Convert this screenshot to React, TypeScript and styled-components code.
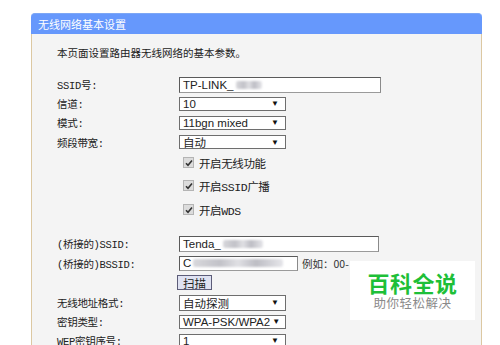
import React from 'react';
import styled, {createGlobalStyle} from 'styled-components';

const GlobalStyle = createGlobalStyle`
  html, body {
    margin: 0;
    padding: 0;
    background: #ffffff;
  }
  body {
    width: 500px;
    height: 345px;
    overflow: hidden;
    font-family: "Noto Sans CJK SC", sans-serif;
  }
`;

const Page = styled.div`
  position: relative;
  padding: 13px 0 0 31px;
  height: 332px;
  overflow: hidden;
`;

const Panel = styled.div`
  width: 451px;
  height: 340px;
  display: flex;
  flex-direction: column;
`;

const Header = styled.div`
  height: 21px;
  line-height: 21px;
  background: #6698fc;
  color: #ffffff;
  font-size: 11px;
  padding-left: 7px;
  border-radius: 4px 4px 0 0;
  border-top: 1px solid #7da7f5;
  box-sizing: border-box;
`;

const Body = styled.div`
  flex: 1;
  background: #f4f4f4;
  border-left: 1px solid #dcc8a2;
  border-right: 1px solid #dcc8a2;
  padding: 12px 0 0 25px;
`;

const Intro = styled.div`
  font-size: 10.5px;
  line-height: 14px;
  color: #222;
  margin-bottom: 15px;
`;

const Form = styled.div`
  display: flex;
  flex-direction: column;
`;

const Row = styled.div<{$h: number}>`
  display: flex;
  align-items: center;
  height: ${p => p.$h}px;
`;

const Label = styled.div`
  width: 122px;
  flex-shrink: 0;
  font-family: "Liberation Mono", "Noto Sans CJK SC", monospace;
  font-size: 10.5px;
  color: #222;
  letter-spacing: -0.3px;
`;

const TextBox = styled.div<{$w: number; $h?: number}>`
  width: ${p => p.$w}px;
  height: ${p => p.$h ?? 16}px;
  box-sizing: border-box;
  background: #fff;
  border: 1px solid #5a5a5a;
  border-right-color: #8a8a8a;
  border-bottom-color: #9a9a9a;
  font-family: "Liberation Sans", "Noto Sans CJK SC", sans-serif;
  font-size: 11.5px;
  color: #222;
  padding-left: 3px;
  display: flex;
  align-items: center;
  white-space: nowrap;
  overflow: hidden;
`;

const Select = styled.div<{$w?: number; $h?: number}>`
  width: ${p => p.$w ?? 107}px;
  height: ${p => p.$h ?? 14}px;
  box-sizing: border-box;
  background: #fff;
  border: 1px solid #6e6e6e;
  font-family: "Liberation Sans", "Noto Sans CJK SC", sans-serif;
  font-size: 11.5px;
  color: #222;
  padding: 0 6px 0 3px;
  display: flex;
  align-items: center;
  justify-content: space-between;
  white-space: nowrap;
  overflow: hidden;
`;

const Arrow = styled.span`
  font-size: 8px;
  color: #111;
  flex-shrink: 0;
  margin-left: 2px;
`;

const Blur = styled.span<{$w: number}>`
  display: inline-block;
  width: ${p => p.$w}px;
  height: 8px;
  margin-left: 2px;
  background: linear-gradient(90deg, #d8d8dc, #c2c2c8 30%, #e0e0e4 50%, #bdbdc4 70%, #e6e6ea);
  filter: blur(1.2px);
  border-radius: 2px;
`;

const CheckRow = styled.div`
  display: flex;
  align-items: center;
  margin-left: 4px;
  gap: 5px;
  font-family: "Liberation Mono", "Noto Sans CJK SC", monospace;
  font-size: 11.5px;
  color: #222;
  letter-spacing: -0.4px;
`;

const CheckBox = styled.span`
  width: 9px;
  height: 9px;
  background: #dcdcdc;
  border: 1px solid #b4b4b4;
  display: flex;
  align-items: center;
  justify-content: center;
`;

const ScanButton = styled.div`
  width: 35px;
  height: 15px;
  margin-left: -2px;
  box-sizing: border-box;
  border: 1px solid #5c5c78;
  background: #dfe2f2;
  font-size: 11.5px;
  color: #222;
  display: flex;
  align-items: center;
  justify-content: center;
`;

const Hint = styled.span`
  margin-left: 4px;
  font-size: 10.5px;
  color: #333;
  white-space: nowrap;
`;

const Watermark = styled.div`
  position: absolute;
  left: 350px;
  top: 261px;
  width: 125px;
  height: 59px;
  background: #ffffff;
  display: flex;
  flex-direction: column;
  align-items: center;
  justify-content: center;
`;

const MarkTitle = styled.div`
  font-size: 22px;
  font-weight: 700;
  line-height: 25px;
  color: #1ebf38;
  letter-spacing: 0.5px;
`;

const MarkSub = styled.div`
  font-size: 12.5px;
  line-height: 16px;
  color: #8a8a8a;
  letter-spacing: 0.5px;
`;

const Check = () => (
    <CheckBox>
        <svg width="8" height="8" viewBox="0 0 8 8">
            <path d="M1 4.2 L3 6.3 L7 1.5" stroke="#333" strokeWidth="1.6" fill="none"/>
        </svg>
    </CheckBox>
);

export default function App() {
    return (
        <Page>
            <GlobalStyle/>
            <Panel>
                <Header>无线网络基本设置</Header>
                <Body>
                    <Intro>本页面设置路由器无线网络的基本参数。</Intro>
                    <Form>
                        <Row $h={19}>
                            <Label>SSID号:</Label>
                            <TextBox $w={202}>TP-LINK_<Blur $w={26}/></TextBox>
                        </Row>
                        <Row $h={19}>
                            <Label>信道:</Label>
                            <Select>10<Arrow>▼</Arrow></Select>
                        </Row>
                        <Row $h={19.5}>
                            <Label>模式:</Label>
                            <Select>11bgn mixed<Arrow>▼</Arrow></Select>
                        </Row>
                        <Row $h={19}>
                            <Label>频段带宽:</Label>
                            <Select>自动<Arrow>▼</Arrow></Select>
                        </Row>
                        <Row $h={22}>
                            <Label/>
                            <CheckRow><Check/>开启无线功能</CheckRow>
                        </Row>
                        <Row $h={24}>
                            <Label/>
                            <CheckRow><Check/>开启SSID广播</CheckRow>
                        </Row>
                        <Row $h={24}>
                            <Label/>
                            <CheckRow><Check/>开启WDS</CheckRow>
                        </Row>
                        <Row $h={12}/>
                        <Row $h={20}>
                            <Label>(桥接的)SSID:</Label>
                            <TextBox $w={200}>Tenda_<Blur $w={40}/></TextBox>
                        </Row>
                        <Row $h={19.5}>
                            <Label>(桥接的)BSSID:</Label>
                            <TextBox $w={119} $h={15}>C<Blur $w={90}/></TextBox>
                            <Hint>例如：00-</Hint>
                        </Row>
                        <Row $h={19.5}>
                            <Label/>
                            <ScanButton>扫描</ScanButton>
                        </Row>
                        <Row $h={20}>
                            <Label>无线地址格式:</Label>
                            <Select $h={16}>自动探测<Arrow>▼</Arrow></Select>
                        </Row>
                        <Row $h={18}>
                            <Label>密钥类型:</Label>
                            <Select>WPA-PSK/WPA2<Arrow>▼</Arrow></Select>
                        </Row>
                        <Row $h={20}>
                            <Label>WEP密钥序号:</Label>
                            <Select>1<Arrow>▼</Arrow></Select>
                        </Row>
                    </Form>
                </Body>
            </Panel>
            <Watermark>
                <MarkTitle>百科全说</MarkTitle>
                <MarkSub>助你轻松解决</MarkSub>
            </Watermark>
        </Page>
    );
}
